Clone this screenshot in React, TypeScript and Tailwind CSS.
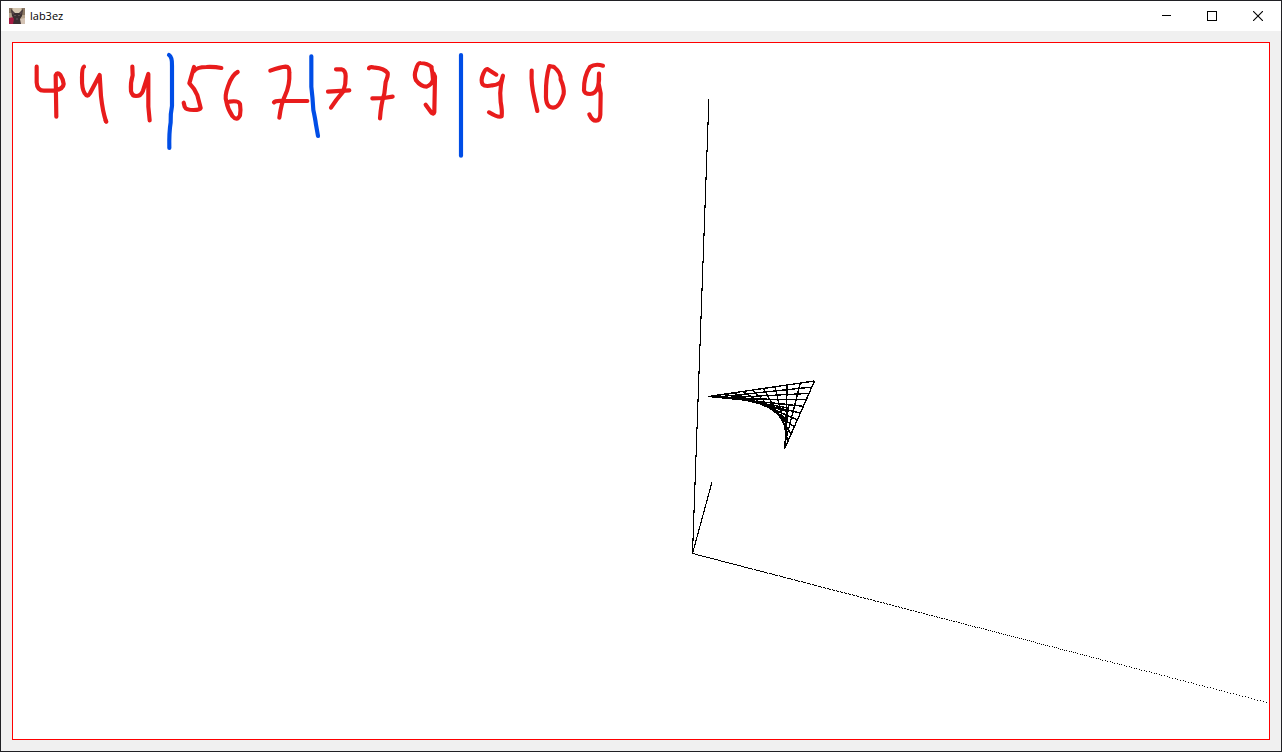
import React from "react";

type Vertex = { x: number; y: number; z: number };

const A: Vertex = { x: 708.5, y: 396.5, z: 1 };
const B: Vertex = { x: 814.5, y: 381, z: 0.72 };
const C: Vertex = { x: 784.5, y: 449, z: 0.64 };
const D: Vertex = { x: 788.5, y: 404.5, z: 0.85 };
const STEPS = 10;

// Perspective-correct point of the bilinear patch A-B-C-D.
function patchPoint(u: number, v: number) {
  const weights: [Vertex, number][] = [
    [A, (1 - u) * (1 - v)],
    [B, u * (1 - v)],
    [C, u * v],
    [D, (1 - u) * v],
  ];
  let x = 0;
  let y = 0;
  let z = 0;
  for (const [p, w] of weights) {
    x += p.x * p.z * w;
    y += p.y * p.z * w;
    z += p.z * w;
  }
  return `${(x / z).toFixed(1)} ${(y / z).toFixed(1)}`;
}

const patchPath = Array.from({ length: STEPS + 1 }, (_, i) => {
  const t = i / STEPS;
  return `M${patchPoint(t, 0)}L${patchPoint(t, 1)}M${patchPoint(0, t)}L${patchPoint(1, t)}`;
}).join("");

// The long axis is plotted point by point, so its points spread out near the viewer.
function axisDots() {
  let d = "";
  let x = 0;
  while (x < 577) {
    d += `M${692 + Math.round(x)} ${553 + Math.round(x * 0.2595)}h1v1h-1z`;
    x += 0.88 * (1 + 0.00153 * x) ** 2;
  }
  return d;
}

const dots = axisDots();

type Ink = { at: string; strokes: string[] };

const redInk: Ink[] = [
  {
    at: "translate(20 45) scale(0.33333)",
    strokes: [
      "M50 65L50 112Q51 137 72 137L104 136Q130 132 131 117Q130 104 121 90Q112 80 107 91L109 215",
      "M192 65Q186 68 186 98Q185 131 194 145Q202 159 210 145L239 90L243 154Q248 200 258 229",
      "M337 65L338 91Q331 112 333 138Q336 153 348 153Q363 153 369 137L385 87L385 185L389 226",
      "M257 227L259 230",
    ],
  },
  {
    at: "translate(160 45) scale(0.33333)",
    strokes: [
      "M102 66L88 115Q104 131 112 151L122 189Q120 195 101 195Q78 195 74 185L71 173",
      "M102 78Q111 66 139 66Q165 65 184 69",
      "M233 81Q216 89 204 124Q193 154 199 169Q203 192 217 213Q231 230 240 211Q243 197 240 177Q235 166 209 170",
      "M331 77Q361 66 377 65Q389 65 388 83Q390 121 375 152Q364 174 358 218",
      "M342 172Q346 167 366 168L442 168",
    ],
  },
  {
    at: "translate(310 45) scale(0.33333)",
    strokes: [
      "M78 73L94 73Q107 76 107 94Q108 117 100 139L79 165L63 188",
      "M54 140L118 136",
      "M177 70Q179 64 195 68Q223 71 233 84Q235 91 227 111L223 146Q213 177 210 220",
      "M187 160L221 159L248 155",
      "M365 66Q352 55 332 54Q323 53 318 74Q311 91 318 106Q332 125 350 125Q366 119 369 104Q368 82 364 67M371 86L375 95L373 201Q371 209 365 204L347 179",
    ],
  },
  {
    at: "translate(450 45) scale(0.33333)",
    strokes: [
      "M139 89L112 72Q106 71 100 86Q91 107 98 118Q105 126 127 121Q151 119 155 105L159 92L153 119Q149 142 152 171Q157 197 155 214Q146 220 117 202",
      "M245 77Q243 119 253 158L262 198",
      "M312 66L298 63Q287 100 288 146Q286 188 309 188Q329 188 341 147Q343 127 332 104Q334 84 312 66",
      "M459 62Q435 55 420 66Q401 94 402 136Q404 147 420 147Q437 147 444 125Q449 106 447 86L446 116L452 145L451 209Q450 227 438 227Q426 227 418 208",
    ],
  },
];

const blueInk: Ink[] = [
  {
    at: "translate(20 45) scale(0.33333)",
    strokes: ["M447 30Q457 36 456 63L456 183Q451 207 452 232Q447 262 448 309"],
  },
  {
    at: "translate(310 45) scale(0.33333)",
    strokes: ["M4 34L4 125Q8 158 10 195Q16 223 18 239L24 273", "M453 30L453 332"],
  },
];

function InkLayer({ items, className }: { items: Ink[]; className: string }) {
  return (
    <g className={className} fill="none" strokeWidth="12.5" strokeLinecap="round" strokeLinejoin="round">
      {items.map((ink, i) => (
        <g key={i} transform={ink.at}>
          {ink.strokes.map((d) => (
            <path key={d} d={d} />
          ))}
        </g>
      ))}
    </g>
  );
}

function AppIcon() {
  return (
    <svg className="h-4 w-4" viewBox="0 0 16 16" aria-hidden="true">
      <rect width="16" height="16" fill="#b8a58e" />
      <path d="M0 0h3v5H0zM13 0h3v7h-3z" fill="#8b7864" />
      <path d="M4 0h8v5H4z" fill="#d6c8b2" />
      <path d="M0 10l5-1v7H0z" fill="#a51b42" />
      <path d="M11 11l5-1v6h-5z" fill="#d4c3b4" />
      <path d="M2 1l4 4h4l4-4-1 7-2 3 1 5H4l1-5-2-3z" fill="#3a3032" />
      <path d="M3 3l2 2-1 2zM13 3l-2 2 1 2z" fill="#655052" />
      <path d="M5 7h2v1H5zM9 7h2v1H9z" fill="#5f5150" />
      <path d="M7 10h2v2H7z" fill="#51434a" />
    </svg>
  );
}

function CaptionButton({ label, children }: { label: string; children: React.ReactNode }) {
  return (
    <button type="button" aria-label={label} className="flex w-[46px] items-center justify-center hover:bg-gray-200">
      <svg className="h-[10px] w-[10px]" viewBox="0 0 10 10" fill="none" stroke="#000" aria-hidden="true">
        {children}
      </svg>
    </button>
  );
}

export default function App() {
  return (
    <div className="flex min-h-screen flex-col border border-[#202024] bg-[#f0f0f0] font-['Open_Sans','Noto_Sans',sans-serif]">
      <header className="flex h-[30px] items-stretch justify-between bg-white">
        <div className="flex items-center gap-[5px] pl-2">
          <AppIcon />
          <h1 className="text-[11px] leading-4 text-black">lab3ez</h1>
        </div>
        <div className="flex">
          <CaptionButton label="Minimize">
            <path d="M1 4.5h9" shapeRendering="crispEdges" />
          </CaptionButton>
          <CaptionButton label="Maximize">
            <path d="M.5 .5h9v9h-9z" shapeRendering="crispEdges" />
          </CaptionButton>
          <CaptionButton label="Close">
            <path d="M0 0l10 10M10 0L0 10" strokeWidth="1.1" />
          </CaptionButton>
        </div>
      </header>
      <main className="flex flex-1 flex-col p-[11px]">
        <div className="flex flex-1 border border-[#ff0000] bg-white">
          <svg className="min-h-[640px] min-w-0 flex-1" role="img" aria-label="Projected surface with axes and handwritten notes">
            <g transform="translate(-13 -43)">
              <g fill="none" stroke="#000" shapeRendering="crispEdges">
                <path d="M708.9 99L692.5 553.5L711.9 482.5" strokeWidth="1.1" />
                <path d={patchPath} strokeWidth="1.35" />
              </g>
              <path d={dots} fill="#000" shapeRendering="crispEdges" />
              <InkLayer items={redInk} className="stroke-[#e81c1c]" />
              <InkLayer items={blueInk} className="stroke-[#004de6]" />
            </g>
          </svg>
        </div>
      </main>
    </div>
  );
}
